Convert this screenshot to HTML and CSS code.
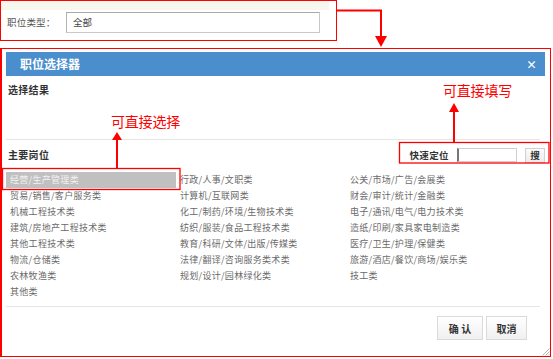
FILE: index.html
```html
<!DOCTYPE html>
<html lang="zh-CN">
<head>
<meta charset="utf-8">
<title>职位选择器</title>
<link rel="stylesheet" href="styles.css">
</head>
<body>
<div class="page">
  <div class="top-box">
    <div class="strip"></div>
    <div class="field">
      <span class="field-label">职位类型：</span>
      <div class="field-input">全部</div>
    </div>
  </div>

  <div class="frame">
    <div class="dialog">
      <div class="dlg-head">
        <span class="dlg-title">职位选择器</span>
        <span class="dlg-close">×</span>
      </div>
      <div class="section-title result-title">选择结果</div>
      <div class="result-area"></div>
      <div class="divider"></div>
      <div class="main-row">
        <div class="section-title">主要岗位</div>
        <div class="quick">
          <span class="quick-label">快速定位</span>
          <span class="quick-input"></span>
          <span class="quick-btn">搜</span>
        </div>
      </div>
      <div class="grid">
        <div class="item selected">经营/生产管理类</div>
        <div class="item">行政/人事/文职类</div>
        <div class="item">公关/市场/广告/会展类</div>
        <div class="item">贸易/销售/客户服务类</div>
        <div class="item">计算机/互联网类</div>
        <div class="item">财会/审计/统计/金融类</div>
        <div class="item">机械工程技术类</div>
        <div class="item">化工/制药/环境/生物技术类</div>
        <div class="item">电子/通讯/电气/电力技术类</div>
        <div class="item">建筑/房地产工程技术类</div>
        <div class="item">纺织/服装/食品工程技术类</div>
        <div class="item">造纸/印刷/家具家电制造类</div>
        <div class="item">其他工程技术类</div>
        <div class="item">教育/科研/文体/出版/传媒类</div>
        <div class="item">医疗/卫生/护理/保健类</div>
        <div class="item">物流/仓储类</div>
        <div class="item">法律/翻译/咨询服务类术类</div>
        <div class="item">旅游/酒店/餐饮/商场/娱乐类</div>
        <div class="item">农林牧渔类</div>
        <div class="item">规划/设计/园林绿化类</div>
        <div class="item">技工类</div>
        <div class="item">其他类</div>
      </div>
      <div class="divider bottom-divider"></div>
      <div class="actions">
        <button class="btn btn-ok">确 认</button>
        <button class="btn btn-cancel">取消</button>
      </div>
    </div>
    <svg class="grip" width="8" height="8" viewBox="0 0 8 8">
      <line x1="7.5" y1="0.5" x2="0.5" y2="7.5" stroke="#b5b5b5" stroke-width="1"/>
      <line x1="7.5" y1="3.5" x2="3.5" y2="7.5" stroke="#b5b5b5" stroke-width="1"/>
      <line x1="7.5" y1="6" x2="6" y2="7.5" stroke="#b5b5b5" stroke-width="1"/>
    </svg>
  </div>

  <svg class="annot" width="553" height="359" viewBox="0 0 553 359">
    <polyline points="337,10.5 381,10.5 381,38" fill="none" stroke="#f00" stroke-width="2"/>
    <polygon points="375,36 387,36 381,47" fill="#f00"/>
    <line x1="117" y1="137" x2="117" y2="168" stroke="#f00" stroke-width="2"/>
    <polygon points="112,140 122,140 117,132" fill="#f00"/>
    <line x1="454" y1="109" x2="454" y2="142" stroke="#f00" stroke-width="2"/>
    <polygon points="449,112 459,112 454,103" fill="#f00"/>
    <rect x="2.5" y="168.5" width="177.5" height="21" fill="none" stroke="#f00" stroke-width="1.3"/>
    <rect x="399.5" y="142.5" width="149.5" height="20.5" fill="none" stroke="#f00" stroke-width="1.3"/>
  </svg>
  <div class="note note-left">可直接选择</div>
  <div class="note note-right">可直接填写</div>
</div>
</body>
</html>
```

FILE: styles.css
```css
* { box-sizing: border-box; }
html, body { margin: 0; padding: 0; background: #fff; }
body {
  font-family: "Noto Sans CJK SC", "Noto Sans", sans-serif;
  width: 553px;
  height: 359px;
  overflow: hidden;
}
.page { position: relative; width: 553px; height: 359px; }

/* top field box */
.top-box { width: 337px; height: 41px; border: 1px solid #f00; }
.strip { width: 328px; height: 9px; background: #f6f8f0; }
.field { display: flex; align-items: center; margin-top: 2px; height: 21px; }
.field-label {
  width: 65px; padding-left: 6px;
  font-size: 9.5px; letter-spacing: 0.2px; color: #555; line-height: 21px;
}
.field-input {
  width: 254px; height: 21px;
  border: 1px solid #c9c9c9; border-top-color: #a9a9a9; border-left-color: #b3b3b3;
  padding-left: 6px;
  font-size: 9.5px; color: #444; line-height: 19px;
}

/* dialog frame */
.frame {
  position: relative;
  margin-top: 7px;
  width: 551px; height: 309px;
  border: 1px solid #f00; border-left-width: 2px;
}
.dialog { margin: 3px 0 0 4px; width: 539px; }
.dlg-head {
  height: 24px; background: #4a8ecd;
  display: flex; align-items: center; justify-content: space-between;
  padding: 0 8px 0 14px;
}
.dlg-title { color: #fff; font-size: 12px; font-weight: bold; line-height: 24px; }
.dlg-close { color: #fff; font-size: 11px; font-weight: bold; line-height: 24px; }

.section-title {
  padding-left: 2px;
  font-size: 10px; font-weight: bold; color: #333; letter-spacing: 0.3px;
  line-height: 12px;
}
.result-title { margin-top: 8px; height: 12px; }
.result-area { height: 43px; }
.divider { width: 534px; height: 1px; background: #e6e6e6; }

.main-row {
  height: 30px;
  display: flex; align-items: center; justify-content: space-between;
}
.quick { display: flex; align-items: center; }
.quick-label { font-size: 9.5px; font-weight: bold; color: #333; letter-spacing: 0.4px; margin-right: 8px; }
.quick-input {
  width: 60px; height: 14px; background: #fff;
  border: 1px solid #cfcfcf; border-left: 2px solid #777;
  margin-right: 8px;
}
.quick-btn {
  width: 20px; height: 15px;
  border: 1px solid #d0d0d0;
  background: linear-gradient(#fcfcfc, #ececec);
  font-size: 9.5px; font-weight: bold; color: #333;
  display: flex; align-items: center; justify-content: center;
}

.grid {
  margin-top: 2px;
  display: grid;
  grid-template-columns: repeat(3, 170px);
  grid-auto-rows: 16px;
}
.item {
  padding-left: 4px;
  font-size: 9px; letter-spacing: 0.3px; line-height: 16px;
  color: #6a6a6a; white-space: nowrap;
}
.item.selected { background: #c0c0c0; color: #f2f2f2; }

.bottom-divider { margin-top: 6px; }
.actions {
  margin-top: 9px;
  display: flex; justify-content: flex-end; gap: 3px;
  padding-right: 18px;
}
.btn {
  height: 24px; padding: 0;
  border: 1px solid #dadada;
  background: linear-gradient(#ffffff, #f0f0f0);
  font-family: inherit; font-size: 10px; font-weight: bold; color: #333;
}
.btn-ok { width: 46px; }
.btn-cancel { width: 41px; }
.grip { position: absolute; right: 0; bottom: 0; }

/* annotations */
.annot { position: absolute; left: 0; top: 0; pointer-events: none; }
.note {
  position: absolute;
  font-size: 14px; line-height: 14px; color: #f00; letter-spacing: -0.2px;
  white-space: nowrap;
}
.note-left { left: 111px; top: 114px; }
.note-right { left: 443px; top: 83px; }
```
